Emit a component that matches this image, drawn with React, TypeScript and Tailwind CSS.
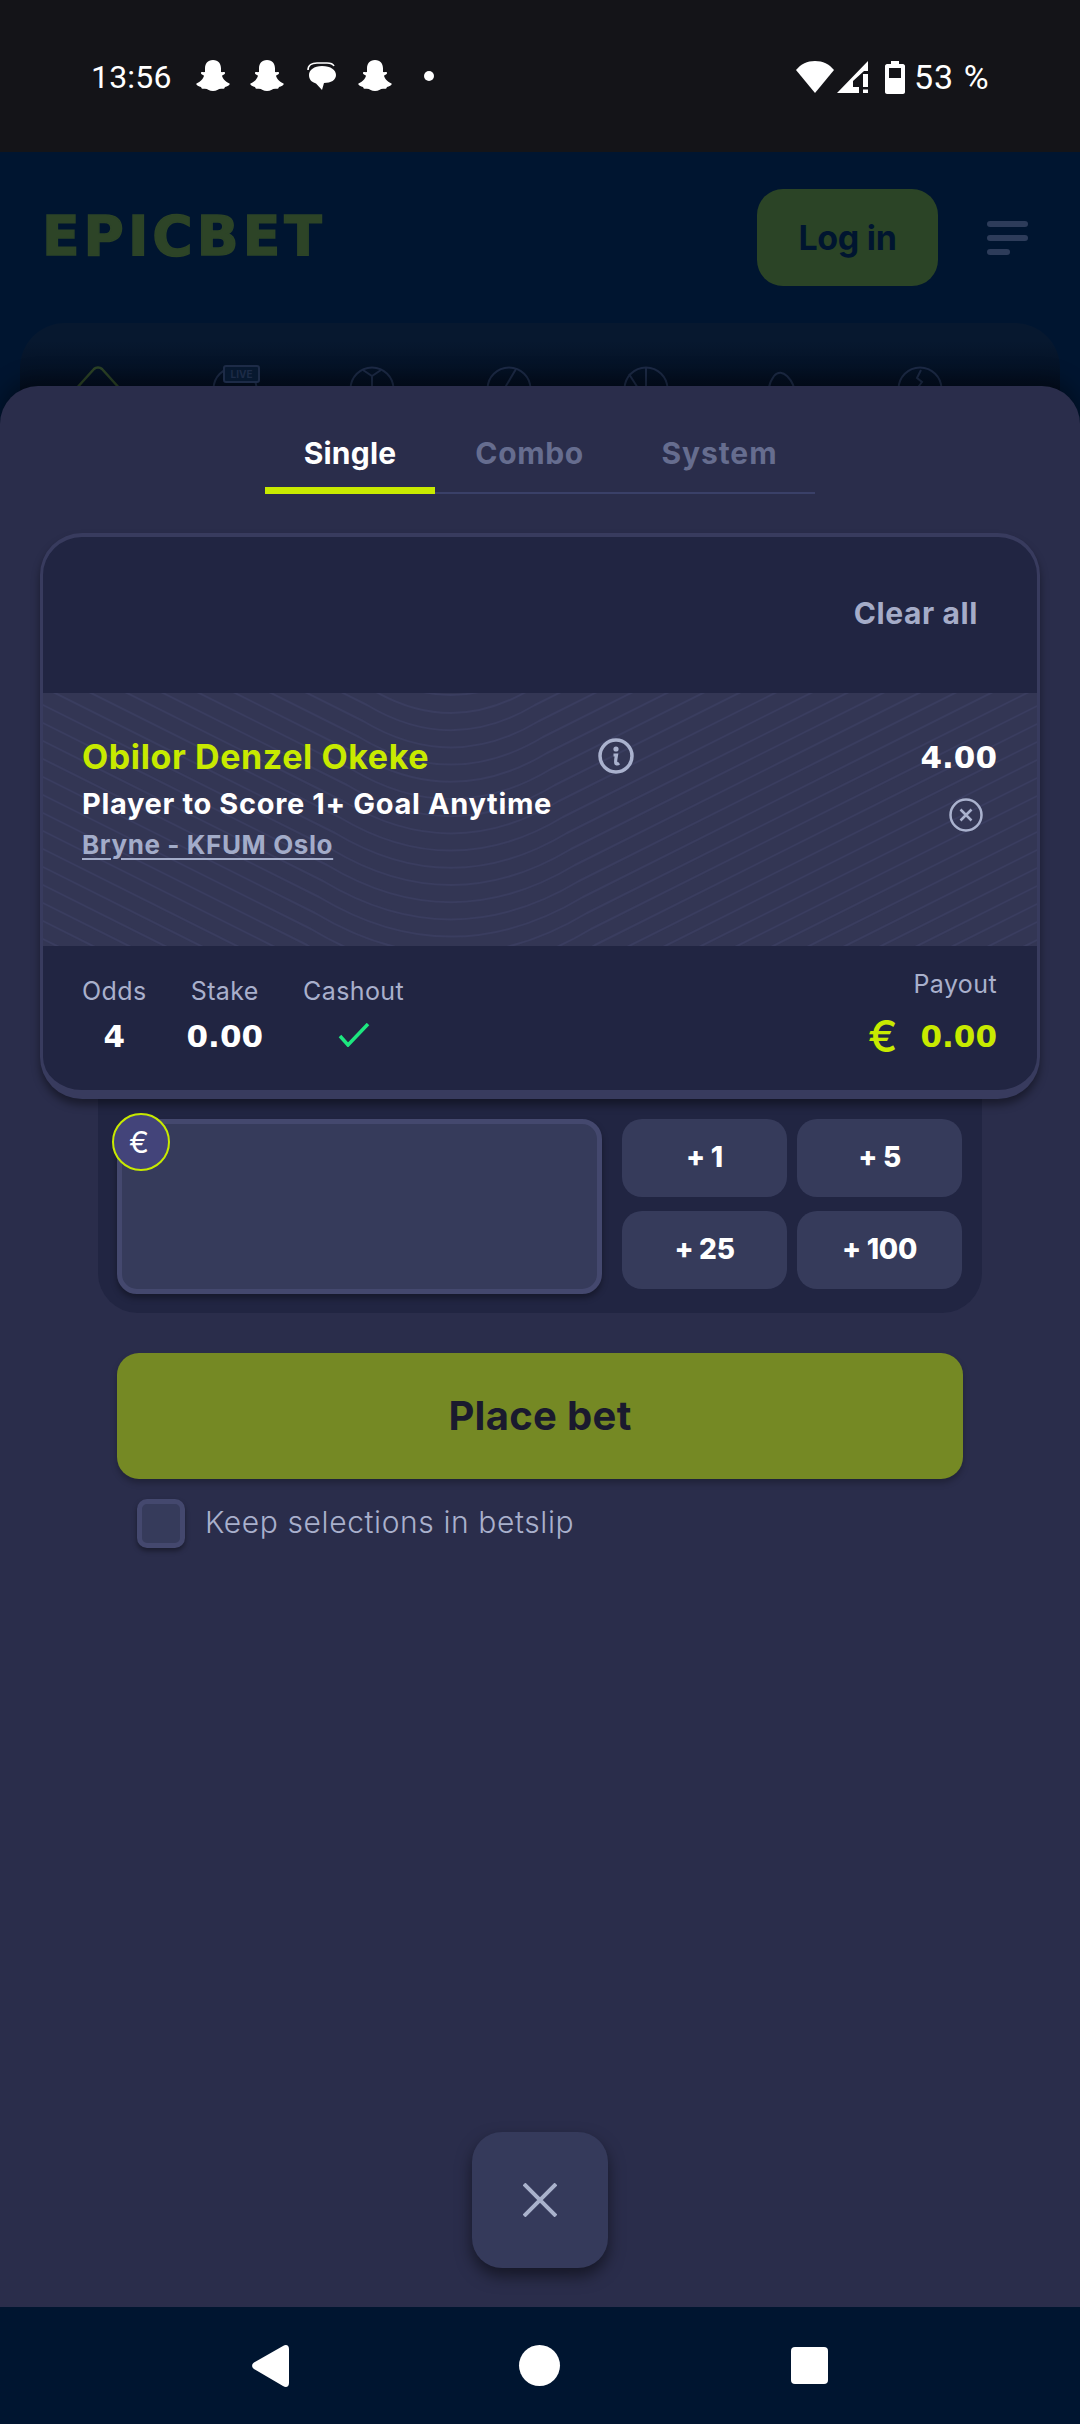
const Ghost = () => (
  <svg width="34" height="31" viewBox="0 0 34 31" fill="#fff">
    <path d="M17 0C22.5 0 25 4 25 8.5L25 12C26.5 12.5 28 11.5 29 12.5C29.5 14 27 15 26 15.5C26.5 18.5 29.5 22 33.5 23.5C34.5 25 31.5 26.5 29 27C28.5 28.5 28 29 26 28.8C22.5 28.3 21 31 17 31C13 31 11.5 28.3 8 28.8C6 29 5.5 28.5 5 27C2.5 26.5-.5 25 .5 23.5C4.5 22 7.5 18.5 8 15.5C7 15 4.5 14 5 12.5C6 11.5 7.5 12.5 9 12L9 8.5C9 4 11.5 0 17 0Z" />
  </svg>
);

const Chat = () => (
  <svg width="30" height="28" viewBox="0 0 30 28" fill="none">
    <path d="M1 8C1 3 5 1 10 1H20C24 1 26 2 27 4" stroke="#fff" strokeWidth="1.6" />
    <path d="M15 4C24 4 29 8 29 13C29 18 24 21 17 21L15 28L9 21.500C4 20 2 17 2 13C2 8 7 4 15 4Z" fill="#fff" />
  </svg>
);

const StatusBar = () => (
  <div className="h-[152px] bg-[#141418] flex items-start pt-[60px] pl-[91px] text-white font-['Roboto',sans-serif] text-[32px] leading-[34px]">
    <span className="w-[105px] tracking-[0.2px]">13:56</span>
    <div className="flex items-center">
      <Ghost />
      <span className="w-[20px]" />
      <Ghost />
      <span className="w-[23px]" />
      <Chat />
      <span className="w-[21px]" />
      <Ghost />
      <span className="ml-[32px] w-[10px] h-[10px] rounded-full bg-white" />
    </div>
    <div className="ml-[362px] flex items-center">
      <svg width="38" height="32" viewBox="0 0 38 32" fill="#fff">
        <path d="M0 9C5 3 11 0 19 0C27 0 33 3 38 9L19 32Z" />
      </svg>
      <svg width="32" height="32" viewBox="0 0 32 32" fill="#fff" className="ml-[3px]">
        <path d="M31 0V10H27L16 20V26H22V32H0Z" />
        <path d="M26 13H31V26H26ZM26 28.500H31V32H26Z" />
      </svg>
      <svg width="20" height="33" viewBox="0 0 20 33" fill="#fff" className="ml-[16px]">
        <path fillRule="evenodd" d="M6 0H14V3H18C19 3 20 4 20 5V31C20 32 19 33 18 33H2C1 33 0 32 0 31V5C0 4 1 3 2 3H6ZM4 7V17H16V7Z" />
      </svg>
      <span className="ml-[9px] text-[34px] tracking-[1px]">53 %</span>
    </div>
  </div>
);

const BallIcon = ({ d }: { d: string }) => (
  <svg width="46" height="46" viewBox="0 0 46 46" fill="none" stroke="#1d2b47" strokeWidth="2">
    <circle cx="23" cy="23" r="21.500" />
    <path d={d} />
  </svg>
);

const Backdrop = () => (
  <div className="h-[1000px] bg-[#001530]">
    <div className="h-[171px] flex items-start">
      <span className="ml-[42px] mt-[52px] w-[300px] text-[#2d4427] font-['DejaVu_Sans',sans-serif] font-bold text-[55px] leading-[64px] tracking-[4px] [-webkit-text-stroke:1.5px_#2d4427]">EPICBET</span>
      <div className="ml-auto mt-[37px] w-[181px] h-[97px] rounded-[26px] bg-[#2b4426] flex items-center justify-center font-['Inter',sans-serif] font-bold text-[34px] text-[#001530] tracking-[-0.3px]">Log in</div>
      <div className="ml-[49px] mr-[52px] mt-[69px] flex flex-col gap-[8px] w-[41px]">
        <span className="h-[6px] rounded-full bg-[#2d3c5a]" />
        <span className="h-[6px] rounded-full bg-[#2d3c5a]" />
        <span className="h-[6px] w-[23px] rounded-full bg-[#2d3c5a]" />
      </div>
    </div>
    <div className="mx-[20px] h-[300px] rounded-[45px] bg-gradient-to-b from-[#07182f] from-[6%] to-[#030e20] to-[22%] pl-[9px] pt-[43px] flex items-start">
      <div className="w-[137px] flex justify-center">
        <svg width="50" height="40" viewBox="0 0 50 40" fill="none" stroke="#2d4427" strokeWidth="2.500"><path d="M2 24L21 3C23 1 27 1 29 3L48 24V40H2Z" strokeLinejoin="round" /></svg>
      </div>
      <div className="w-[137px] flex justify-center relative">
        <div className="absolute left-[57px] top-[-1px] z-10 w-[37px] h-[18px] rounded-[3px] border-2 border-[#1d2b47] bg-[#07182f] flex items-center justify-center font-['Inter',sans-serif] font-bold text-[10px] leading-none text-[#1d2b47]">LIVE</div>
        <BallIcon d="M14 4L23 14L32 4" />
      </div>
      <div className="w-[137px] flex justify-center"><BallIcon d="M14 4L23 10L32 4M23 10V20" /></div>
      <div className="w-[137px] flex justify-center"><BallIcon d="M30 3L14 30" /></div>
      <div className="w-[137px] flex justify-center"><BallIcon d="M23 2V44M6 8L20 30" /></div>
      <div className="w-[137px] flex justify-center">
        <svg width="46" height="46" viewBox="0 0 46 46" fill="none" stroke="#1d2b47" strokeWidth="2"><path d="M8 40C8 25 8 18 14 10C22 0 34 14 36 30" /><circle cx="22" cy="24" r="3" /></svg>
      </div>
      <div className="w-[137px] flex justify-center"><BallIcon d="M24 4L20 12L25 16L19 24" /></div>
    </div>
  </div>
);

const Pattern = () => {
  const lines: string[] = [];
  for (let i = -2; i < 34; i++) {
    const y = i * 18;
    const r = 40 + Math.max(i - 2, 0) * 2;
    lines.push(`M-20 ${y - 214} L${408 - r * 2} ${y - r} Q408 ${y + r * 0.2} ${408 + r * 2} ${y - r} L1014 ${y - 303}`);
  }
  return (
    <svg className="absolute inset-0" width="994" height="253" viewBox="0 0 994 253" fill="none" stroke="#3a3d5f" strokeWidth="2">
      {lines.map((d) => (
        <path key={d} d={d} />
      ))}
    </svg>
  );
};

const BetCard = () => (
  <div className="relative z-10 mx-[40px] mt-[39px] h-[566px] rounded-[42px] border-x-[3px] border-t-[4px] border-b-[9px] border-[#383b5e] overflow-hidden shadow-[0_6px_8px_rgba(0,0,0,0.4)] bg-[#212542]">
    <div className="h-[156px] flex items-start justify-end pr-[59px] pt-[56px]">
      <span className="font-['Inter',sans-serif] font-bold text-[#a5acc8] text-[30px] leading-[40px] tracking-[0.6px]">Clear all</span>
    </div>
    <div className="relative h-[253px] bg-[#333654] pl-[39px] pr-[40px] pt-[44px]">
      <Pattern />
      <div className="relative flex justify-between">
        <div className="flex flex-col font-['Inter',sans-serif]">
          <div className="flex items-center h-[40px]">
            <span className="w-[516px] font-bold text-[#c8ea00] text-[34px] leading-[40px] tracking-[0.6px] whitespace-nowrap">Obilor Denzel Okeke</span>
            <svg width="36" height="36" viewBox="0 0 36 36" fill="none" stroke="#aab2ce" className="-mt-[2px]">
              <circle cx="18" cy="18" r="16" strokeWidth="3.500" />
              <circle cx="18" cy="11" r="2.600" fill="#aab2ce" stroke="none" />
              <path d="M15.500 17H18.500C18 20 17 24 18 25.500C19 26 20 26 21 25" strokeWidth="3.200" />
            </svg>
          </div>
          <span className="mt-[7px] font-bold text-white text-[29px] leading-[40px] tracking-[0.65px] whitespace-nowrap">Player to Score 1+ Goal Anytime</span>
          <span className="mt-[3px] font-bold text-[#a3acc9] text-[26px] leading-[36px] tracking-[0.6px] underline underline-offset-[4px] decoration-[2px]">Bryne - KFUM Oslo</span>
        </div>
        <div className="flex flex-col items-end">
          <span className="font-['DejaVu_Sans',sans-serif] font-bold text-white text-[31px] leading-[40px]">4.00</span>
          <svg width="34" height="34" viewBox="0 0 34 34" fill="none" stroke="#aab2ce" strokeWidth="2.500" className="mt-[21px] mr-[14px]">
            <circle cx="17" cy="17" r="15.500" />
            <path d="M11.500 11.500L22.500 22.500M22.500 11.500L11.500 22.500" />
          </svg>
        </div>
      </div>
    </div>
    <div className="h-[144px] pl-[39px] pr-[40px] flex justify-between items-start">
      <div className="flex gap-[40px] pt-[27px]">
        <Stat label="Odds" value="4" />
        <Stat label="Stake" value="0.00" />
        <div className="flex flex-col items-center">
          <span className={labelCls}>Cashout</span>
          <svg width="32" height="24" viewBox="0 0 32 24" fill="none" stroke="#1de77f" strokeWidth="3.500" className="mt-[14px]">
            <path d="M2 13L10 22L30 1" />
          </svg>
        </div>
      </div>
      <div className="flex flex-col items-end pt-[20px]">
        <span className={labelCls}>Payout</span>
        <div className="flex items-center mt-[14px] h-[40px] gap-[23px] text-[#c8ea00]">
          <span className="font-['Inter',sans-serif] font-medium text-[44px] leading-[40px]">€</span>
          <span className="font-['DejaVu_Sans',sans-serif] font-bold text-[31px] leading-[40px]">0.00</span>
        </div>
      </div>
    </div>
  </div>
);

const labelCls = "font-['Inter',sans-serif] text-[#a9b0cc] text-[25px] leading-[36px] tracking-[0.4px]";

const Stat = ({ label, value }: { label: string; value: string }) => (
  <div className="flex flex-col items-center">
    <span className={labelCls}>{label}</span>
    <span className="mt-[7px] font-['DejaVu_Sans',sans-serif] font-bold text-white text-[31px] leading-[40px]">{value}</span>
  </div>
);

const StakeBox = () => (
  <div className="relative mx-[98px] h-[214px] rounded-b-[40px] bg-[#212542] pl-[19px] pt-[20px] flex items-start">
    <div className="w-[485px] h-[175px] rounded-[20px] bg-[#363b5b] border-[5px] border-[#44486e] shadow-[0_4px_6px_rgba(0,0,0,0.35)]" />
    <span className="absolute left-[14px] top-[14px] w-[58px] h-[58px] rounded-full bg-[#43447a] border-2 border-[#c8ea00] flex items-center justify-center pr-[4px] font-['Inter',sans-serif] text-white text-[30px] leading-none">€</span>
    <div className="ml-[20px] grid grid-cols-[165px_165px] grid-rows-[78px_78px] gap-x-[10px] gap-y-[14px]">
      {["+ 1", "+ 5", "+ 25", "+ 100"].map((t) => (
        <div key={t} className="rounded-[20px] bg-[#363b5b] flex items-center justify-center pb-[2px] font-['Inter',sans-serif] font-extrabold text-white text-[28px] tracking-[-0.3px]">
          {t}
        </div>
      ))}
    </div>
  </div>
);

const Sheet = () => (
  <div className="absolute left-0 right-0 top-[234px] h-[1921px] rounded-t-[38px] bg-[#2a2d4b] shadow-[0_-8px_20px_rgba(0,0,0,0.35)]">
    <div className="flex justify-center pt-[34px] font-['Inter',sans-serif] font-bold text-[30px] leading-[67px] text-center">
      <div className="h-[74px] w-[170px] text-white border-b-[7px] border-[#c8ea00] tracking-[0.2px]">Single</div>
      <div className="h-[74px] w-[189px] text-[#666d8f] border-b-[2px] border-[#3a4068] tracking-[0.6px]">Combo</div>
      <div className="h-[74px] w-[191px] text-[#666d8f] border-b-[2px] border-[#3a4068] tracking-[0.9px]">System</div>
    </div>
    <BetCard />
    <StakeBox />
    <div className="mx-[117px] mt-[40px] h-[126px] rounded-[22px] bg-[#758924] shadow-[0_4px_6px_rgba(0,0,0,0.25)] flex items-center justify-center font-['Inter',sans-serif] font-bold text-[#1a1a2e] text-[40px] tracking-[0.3px]">Place bet</div>
    <div className="ml-[137px] mt-[20px] flex items-center gap-[20px]">
      <span className="w-[48px] h-[49px] rounded-[10px] bg-[#363b5b] border-[5px] border-[#44486e] shadow-[0_3px_5px_rgba(0,0,0,0.4)]" />
      <span className="-mt-[4px] font-['Inter',sans-serif] font-light text-[#a9b0cc] text-[30px] leading-[40px] tracking-[0.6px]">Keep selections in betslip</span>
    </div>
    <div className="absolute left-[472px] bottom-[39px] w-[136px] h-[136px] rounded-[30px] bg-[#353a5b] shadow-[0_8px_16px_rgba(0,0,0,0.5)] flex items-center justify-center">
      <svg width="34" height="34" viewBox="0 0 34 34" fill="none" stroke="#a9b2cc" strokeWidth="4">
        <path d="M1 1L33 33M33 1L1 33" />
      </svg>
    </div>
  </div>
);

const NavBar = () => (
  <div className="h-[117px] bg-[#001530] flex items-start pt-[38px] pl-[252px]">
    <svg width="38" height="42" viewBox="0 0 38 42" fill="#fff">
      <path d="M2 17.500L31 1C34 -1 37 0 37 4V38C37 42 34 43 31 41L2 24C-0.500 22.500 -0.500 19 2 17.500Z" />
    </svg>
    <span className="ml-[229px] w-[41px] h-[41px] rounded-full bg-white" />
    <span className="ml-[231px] mt-[2px] w-[37px] h-[37px] rounded-[4px] bg-white" />
  </div>
);

export default function App() {
  return (
    <div className="w-[1080px] h-[2424px] overflow-hidden flex flex-col bg-[#001530]">
      <StatusBar />
      <div className="relative h-[2155px] overflow-hidden">
        <Backdrop />
        <Sheet />
      </div>
      <NavBar />
    </div>
  );
}
